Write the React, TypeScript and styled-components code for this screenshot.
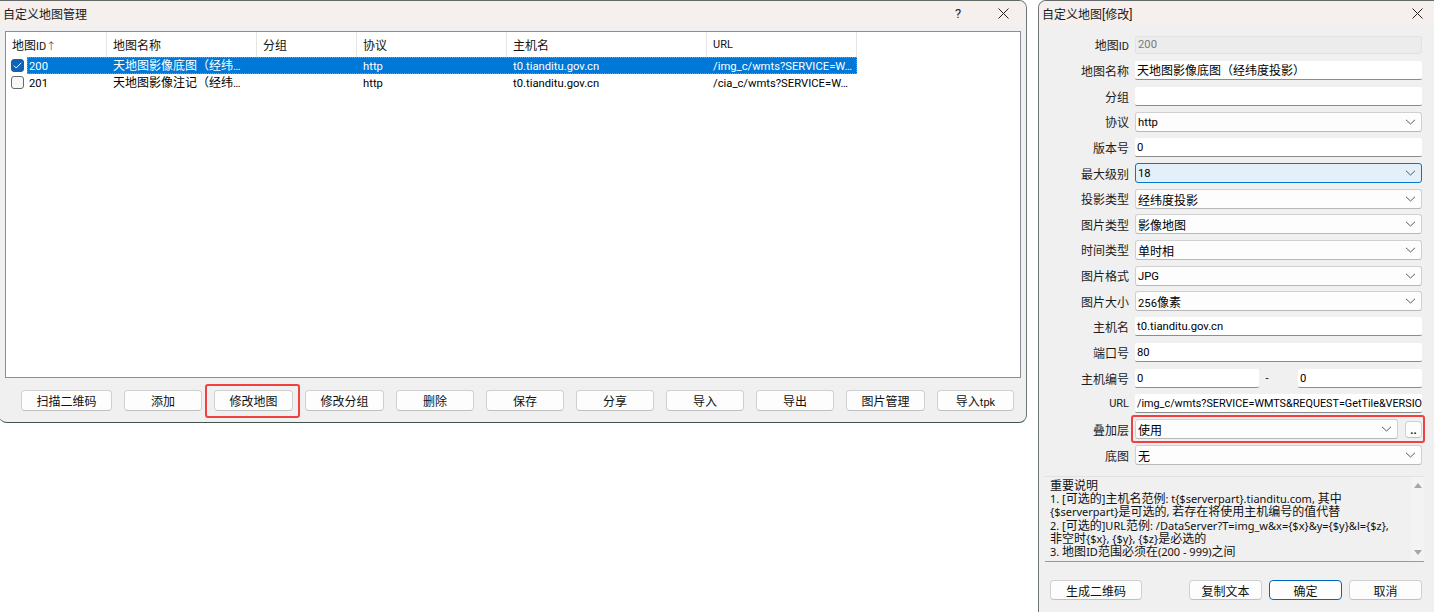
import { ReactNode } from 'react'
import styled, { createGlobalStyle } from 'styled-components'

const GlobalStyle = createGlobalStyle`
	html, body {
		margin: 0;
		padding: 0;
		background: #fff;
	}
	body {
		width: 1434px;
		height: 612px;
		overflow: hidden;
		font-family: 'Roboto', 'Noto Sans CJK SC', sans-serif;
		font-size: 11px;
		color: #000;
	}
`

const columns = [
	{ title: '地图ID', width: 101 },
	{ title: '地图名称', width: 150 },
	{ title: '分组', width: 100 },
	{ title: '协议', width: 150 },
	{ title: '主机名', width: 200 },
	{ title: 'URL', width: 150 },
]

const rows = [
	{
		id: '200',
		name: '天地图影像底图（经纬…',
		protocol: 'http',
		host: 't0.tianditu.gov.cn',
		url: '/img_c/wmts?SERVICE=W…',
		selected: true,
	},
	{
		id: '201',
		name: '天地图影像注记（经纬…',
		protocol: 'http',
		host: 't0.tianditu.gov.cn',
		url: '/cia_c/wmts?SERVICE=W…',
		selected: false,
	},
]

const toolbar = [
	{ label: '扫描二维码', width: 91 },
	{ label: '添加', width: 78 },
	{ label: '修改地图', width: 79, marked: true },
	{ label: '修改分组', width: 79 },
	{ label: '删除', width: 78 },
	{ label: '保存', width: 78 },
	{ label: '分享', width: 78 },
	{ label: '导入', width: 78 },
	{ label: '导出', width: 78 },
	{ label: '图片管理', width: 79 },
	{ label: '导入tpk', width: 77 },
]

const notes = [
	'重要说明',
	'1. [可选的]主机名范例: t{$serverpart}.tianditu.com, 其中',
	'{$serverpart}是可选的, 若存在将使用主机编号的值代替',
	'2. [可选的]URL范例: /DataServer?T=img_w&x={$x}&y={$y}&l={$z},',
	'非空时{$x}, {$y}, {$z}是必选的',
	'3. 地图ID范围必须在(200 - 999)之间',
]

// chinese runs are a bit larger than the latin ones in the original ui font
const Mixed = ({ text }: { text: string }) => (
	<>
		{text.split(/([\u4e00-\u9fff（）]+)/).map((part, i) =>
			i % 2 === 1 ? <Zh key={i}>{part}</Zh> : part,
		)}
	</>
)

const Chevron = () => (
	<svg width='11' height='6' viewBox='0 0 11 6' fill='none'>
		<path d='M1 0.8 L5.5 5 L10 0.8' stroke='#5a5a5a' strokeWidth='1' />
	</svg>
)

const CloseIcon = () => (
	<svg width='11' height='11' viewBox='0 0 11 11' fill='none'>
		<path d='M0.5 0.5 L10.5 10.5 M10.5 0.5 L0.5 10.5' stroke='#222' strokeWidth='1' />
	</svg>
)

const FormRow = ({ label, children }: { label: string; children: ReactNode }) => (
	<Row>
		<Label>
			<Mixed text={label} />
		</Label>
		{children}
	</Row>
)

const Select = ({ value, active }: { value: string; active?: boolean }) => (
	<SelectBox $active={active}>
		<SelectValue>
			<Mixed text={value} />
		</SelectValue>
		<Chevron />
	</SelectBox>
)

const App = () => {
	return (
		<>
			<GlobalStyle />
			<ManagerWindow>
				<TitleBar>
					<TitleText>自定义地图管理</TitleText>
					<HelpButton>?</HelpButton>
					<CloseButton>
						<CloseIcon />
					</CloseButton>
				</TitleBar>
				<TablePanel>
					<HeaderRow>
						{columns.map((col, i) => (
							<HeaderCell key={col.title} $width={col.width}>
								<span>
									<Mixed text={col.title} />
								</span>
								{i === 0 && <SortArrow>↑</SortArrow>}
							</HeaderCell>
						))}
					</HeaderRow>
					{rows.map((row) => (
						<TableRow key={row.id}>
							<CheckCell>
								<Checkbox $checked={row.selected}>
									{row.selected && (
										<svg width='9' height='7' viewBox='0 0 9 7' fill='none'>
											<path d='M0.8 3.6 L3.2 6 L8.2 0.8' stroke='#fff' strokeWidth='1' />
										</svg>
									)}
								</Checkbox>
							</CheckCell>
							<RowBody $selected={row.selected}>
								<Cell $width={80} $pad={2}>{row.id}</Cell>
								<Cell $width={150}>
									<Mixed text={row.name} />
								</Cell>
								<Cell $width={100} />
								<Cell $width={150}>{row.protocol}</Cell>
								<Cell $width={200}>{row.host}</Cell>
								<Cell $width={150}>{row.url}</Cell>
							</RowBody>
						</TableRow>
					))}
				</TablePanel>
				<Toolbar>
					{toolbar.map((btn) => (
						<ToolButton key={btn.label} $width={btn.width} $marked={btn.marked}>
							<span>
								<Mixed text={btn.label} />
							</span>
						</ToolButton>
					))}
				</Toolbar>
			</ManagerWindow>

			<EditWindow>
				<TitleBar>
					<TitleText>
						<Mixed text='自定义地图[修改]' />
					</TitleText>
					<CloseButton>
						<CloseIcon />
					</CloseButton>
				</TitleBar>
				<Form>
					<FormRow label='地图ID'>
						<DisabledInput>200</DisabledInput>
					</FormRow>
					<FormRow label='地图名称'>
						<TextInput>
							<Mixed text='天地图影像底图（经纬度投影）' />
						</TextInput>
					</FormRow>
					<FormRow label='分组'>
						<TextInput />
					</FormRow>
					<FormRow label='协议'>
						<Select value='http' />
					</FormRow>
					<FormRow label='版本号'>
						<TextInput>0</TextInput>
					</FormRow>
					<FormRow label='最大级别'>
						<Select value='18' active />
					</FormRow>
					<FormRow label='投影类型'>
						<Select value='经纬度投影' />
					</FormRow>
					<FormRow label='图片类型'>
						<Select value='影像地图' />
					</FormRow>
					<FormRow label='时间类型'>
						<Select value='单时相' />
					</FormRow>
					<FormRow label='图片格式'>
						<Select value='JPG' />
					</FormRow>
					<FormRow label='图片大小'>
						<Select value='256像素' />
					</FormRow>
					<FormRow label='主机名'>
						<TextInput>t0.tianditu.gov.cn</TextInput>
					</FormRow>
					<FormRow label='端口号'>
						<TextInput>80</TextInput>
					</FormRow>
					<FormRow label='主机编号'>
						<RangeGroup>
							<TextInput>0</TextInput>
							<RangeDash>-</RangeDash>
							<TextInput>0</TextInput>
						</RangeGroup>
					</FormRow>
					<FormRow label='URL'>
						<UrlInput>/img_c/wmts?SERVICE=WMTS&amp;REQUEST=GetTile&amp;VERSIO</UrlInput>
					</FormRow>
					<FormRow label='叠加层'>
						<OverlayGroup>
							<Select value='使用' />
							<DotsButton>..</DotsButton>
						</OverlayGroup>
					</FormRow>
					<FormRow label='底图'>
						<Select value='无' />
					</FormRow>
				</Form>
				<NotesBox>
					<NotesText>
						{notes.map((line) => (
							<NoteLine key={line}>
								<Mixed text={line} />
							</NoteLine>
						))}
					</NotesText>
					<ScrollTrack>
						<ScrollArrow $up />
						<ScrollArrow />
					</ScrollTrack>
				</NotesBox>
				<Footer>
					<FootButton $width={92}>生成二维码</FootButton>
					<FootRight>
						<FootButton $width={73}>复制文本</FootButton>
						<FootButton $width={73} $primary>确定</FootButton>
						<FootButton $width={73}>取消</FootButton>
					</FootRight>
				</Footer>
			</EditWindow>
		</>
	)
}

export default App

const Zh = styled.span`
	font-size: 12px;
`

const WindowFrame = styled.div`
	position: absolute;
	top: 0;
	background: #f0f0f0;
	border: 1px solid #6f7676;
	border-top-color: #646a68;
	box-sizing: border-box;
	border-radius: 8px;
	overflow: hidden;
	display: flex;
	flex-direction: column;
`

const ManagerWindow = styled(WindowFrame)`
	left: -1px;
	width: 1028px;
	height: 423px;
	border-left: none;
	border-bottom-color: #46544f;
	border-radius: 0 8px 8px 8px;
`

const EditWindow = styled(WindowFrame)`
	left: 1038px;
	width: 396px;
	height: 612px;
	border-right: none;
	border-bottom: none;
	border-radius: 8px 0 0 0;
`

const TitleBar = styled.div`
	height: 25px;
	flex: none;
	display: flex;
	align-items: center;
	background: #f5efed;
	padding: 0 0 1px 4px;
	box-sizing: border-box;
	${EditWindow} & {
		padding-left: 3px;
	}
`

const TitleText = styled.div`
	flex: 1;
	font-size: 12px;
	color: #1a1a1a;
`

const HelpButton = styled.div`
	width: 20px;
	margin-right: 30px;
	text-align: center;
	font-size: 13px;
	color: #222;
`

const CloseButton = styled.div`
	display: flex;
	align-items: center;
	justify-content: center;
	width: 11px;
	margin-right: 17px;
	${EditWindow} & {
		margin-right: 11px;
	}
`

const TablePanel = styled.div`
	flex: none;
	height: 347px;
	box-sizing: border-box;
	margin: 5px 5px 0 6px;
	background: #fff;
	border: 1px solid #8a8f96;
`

const HeaderRow = styled.div`
	display: flex;
	height: 25px;
`

const HeaderCell = styled.div<{ $width: number }>`
	width: ${(p) => p.$width}px;
	box-sizing: border-box;
	padding-left: 6px;
	display: flex;
	align-items: center;
	border-right: 1px solid #e5e5e5;
	color: #111;
`

const SortArrow = styled.span`
	font-size: 10px;
	color: #a04040;
	margin-top: 2px;
`

const TableRow = styled.div`
	display: flex;
	height: 17px;
	line-height: 19px;
`

const CheckCell = styled.div`
	width: 21px;
	flex: none;
	display: flex;
	align-items: center;
	justify-content: flex-end;
	padding-right: 3px;
	box-sizing: border-box;
`

const Checkbox = styled.div<{ $checked?: boolean }>`
	width: 13px;
	height: 13px;
	box-sizing: border-box;
	border-radius: 3px;
	display: flex;
	align-items: center;
	justify-content: center;
	background: ${(p) => (p.$checked ? '#0f62b4' : '#f7f7f7')};
	border: 1px solid ${(p) => (p.$checked ? '#0f62b4' : '#6a6a6a')};
`

const RowBody = styled.div<{ $selected?: boolean }>`
	display: flex;
	background: ${(p) => (p.$selected ? '#0078d7' : 'transparent')};
	color: ${(p) => (p.$selected ? '#fff' : '#000')};
	outline: ${(p) => (p.$selected ? '1px dotted #c98a4a' : 'none')};
	outline-offset: -1px;
`

const Cell = styled.div<{ $width: number; $pad?: number }>`
	width: ${(p) => p.$width}px;
	height: 17px;
	box-sizing: border-box;
	padding-left: ${(p) => p.$pad ?? 6}px;
	font-size: 11.25px;
	white-space: nowrap;
	overflow: hidden;
`

const Toolbar = styled.div`
	display: flex;
	gap: 12px;
	padding: 12px 0 0 22px;
`

const PlainButton = styled.div<{ $width: number }>`
	width: ${(p) => p.$width}px;
	box-sizing: border-box;
	display: flex;
	align-items: center;
	justify-content: center;
	background: #fdfdfd;
	border: 1px solid #d0d0d0;
	border-bottom-color: #c0c0c0;
	border-radius: 4px;
	font-size: 12px;
	color: #111;
`

const ToolButton = styled(PlainButton)<{ $marked?: boolean }>`
	height: 21px;
	position: relative;
	font-size: 11px;
	${(p) =>
		p.$marked &&
		`
		&::after {
			content: '';
			position: absolute;
			left: -10px;
			right: -8px;
			top: -7px;
			bottom: -8px;
			border: 2px solid #f04040;
			border-radius: 3px;
		}
	`}
`

const Form = styled.div`
	display: grid;
	grid-auto-rows: 25.65px;
	padding: 6px 12px 0 0;
	height: 442px;
	box-sizing: border-box;
	flex: none;
`

const Row = styled.div`
	display: flex;
	align-items: center;
	gap: 6px;
	min-width: 0;
`

const Label = styled.div`
	width: 90px;
	flex: none;
	text-align: right;
	color: #1c1c1c;
`

const TextInput = styled.div`
	flex: 1;
	min-width: 0;
	height: 19px;
	box-sizing: border-box;
	padding-left: 2px;
	background: #fff;
	border-bottom: 1px solid #8c8c8c;
	border-radius: 2px;
	line-height: 20px;
	font-size: 11.25px;
	white-space: nowrap;
	overflow: hidden;
`

const UrlInput = styled(TextInput)`
	font-size: 10.8px;
	line-height: 19px;
`

const DisabledInput = styled(TextInput)`
	height: 18px;
	background: #ececec;
	border: 1px solid #e2e2e2;
	color: #7a7a7a;
	line-height: 16px;
`

const SelectBox = styled.div<{ $active?: boolean }>`
	flex: 1;
	min-width: 0;
	height: 20px;
	box-sizing: border-box;
	padding: 0 5px 0 2px;
	display: flex;
	align-items: center;
	justify-content: space-between;
	background: ${(p) => (p.$active ? '#e3eff9' : '#fdfdfd')};
	border: 1px solid ${(p) => (p.$active ? '#0078d4' : '#d0d0d0')};
	border-bottom-color: ${(p) => (p.$active ? '#0078d4' : '#b8b8b8')};
	border-radius: 3px;
`

const SelectValue = styled.span`
	padding-top: 1px;
	font-size: 11.25px;
`

const RangeGroup = styled.div`
	flex: 1;
	display: flex;
	align-items: center;
	min-width: 0;
`

const RangeDash = styled.div`
	width: 39px;
	text-align: center;
	padding-right: 23px;
	box-sizing: border-box;
`

const OverlayGroup = styled.div`
	flex: 1;
	display: flex;
	align-items: center;
	gap: 7px;
	position: relative;
	&::after {
		content: '';
		position: absolute;
		left: -4px;
		right: -3px;
		top: -4px;
		bottom: -4px;
		border: 2px solid #f04040;
		border-radius: 3px;
	}
`

const DotsButton = styled(PlainButton).attrs({ $width: 17 })`
	height: 17px;
	flex: none;
	font-size: 11px;
	font-weight: 700;
	padding-top: 2px;
`

const NotesBox = styled.div`
	display: flex;
	height: 86px;
	flex: none;
	box-sizing: border-box;
	margin: 8px 10px 0 6px;
	border-bottom: 1px solid #9a9a9a;
	background: #f0f0f0;
	border-top: 1px solid #e2e2e2;
`

const NotesText = styled.div`
	flex: 1;
	padding: 2px 0 0 5px;
	font-family: 'Noto Sans', 'Noto Sans CJK SC', sans-serif;
	color: #111;
	white-space: nowrap;
	overflow: hidden;
`

const NoteLine = styled.div`
	height: 13.2px;
	line-height: 13.2px;
`

const ScrollTrack = styled.div`
	width: 13px;
	display: flex;
	flex-direction: column;
	justify-content: space-between;
	align-items: center;
	padding: 6px 0 6px;
	box-sizing: border-box;
	background: #f3f3f3;
`

const ScrollArrow = styled.div<{ $up?: boolean }>`
	width: 0;
	height: 0;
	border-left: 4px solid transparent;
	border-right: 4px solid transparent;
	${(p) => (p.$up ? 'border-bottom: 5px solid #a6a6a6;' : 'border-top: 5px solid #a6a6a6;')}
`

const Footer = styled.div`
	display: flex;
	justify-content: space-between;
	padding: 18px 12px 0 11px;
`

const FootRight = styled.div`
	display: flex;
	gap: 7px;
`

const FootButton = styled(PlainButton)<{ $primary?: boolean }>`
	height: 20px;
	${(p) => p.$primary && 'border-color: #0067c0;'}
`
